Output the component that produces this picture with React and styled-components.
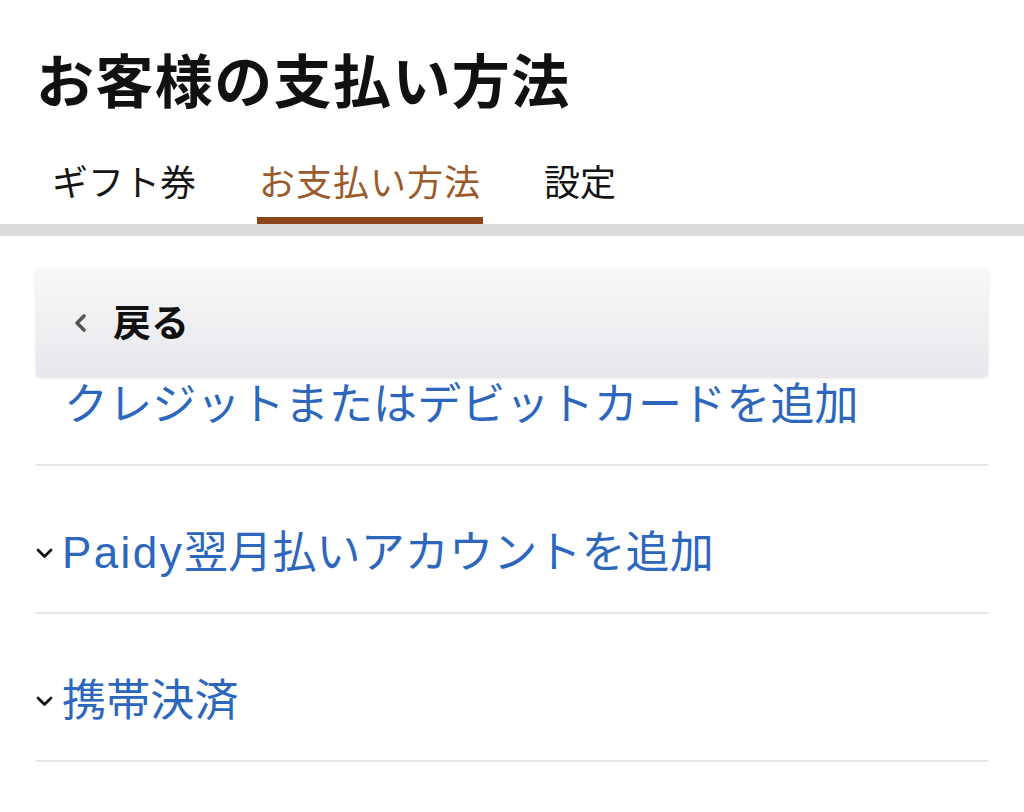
import React from 'react';
import styled, { createGlobalStyle } from 'styled-components';

const GlobalStyle = createGlobalStyle`
  html, body {
    margin: 0;
    padding: 0;
    background: #ffffff;
  }
  body {
    font-family: "Liberation Sans", "Noto Sans CJK JP", sans-serif;
    color: #111111;
  }
`;

const Page = styled.div`
  width: 1024px;
  min-height: 812px;
  background: #ffffff;
`;

const Top = styled.div`
  padding: 48px 36px 0;
`;

const Title = styled.h1`
  margin: 0;
  font-size: 58px;
  line-height: 70px;
  font-weight: 700;
  color: #111111;
  letter-spacing: 1.4px;
`;

const Tabs = styled.nav`
  display: flex;
  gap: 59px;
  margin: 44px 0 0 14px;
`;

const Tab = styled.div`
  padding: 0 2px 11px;
  font-size: 36px;
  line-height: 44px;
  letter-spacing: ${(p) => (p.$active ? '1px' : '0')};
  color: ${(p) => (p.$active ? '#9a5a2c' : '#151515')};
  border-bottom: 7px solid ${(p) => (p.$active ? '#8c4419' : 'transparent')};
`;

const GrayBar = styled.div`
  height: 12px;
  background: #dcdcde;
`;

const Content = styled.div`
  padding: 32px 36px 0;
`;

const BackBar = styled.div`
  display: flex;
  align-items: center;
  gap: 26px;
  height: 109px;
  padding-left: 37px;
  border-radius: 5px;
  background: linear-gradient(#f8f8fa, #e8e8ec);
  box-shadow: 0 1px 3px rgba(0, 0, 0, 0.14);
  box-sizing: border-box;
`;

const BackLabel = styled.span`
  font-size: 38px;
  font-weight: 700;
  line-height: 46px;
  color: #111111;
`;

const Row = styled.div`
  display: flex;
  align-items: center;
  padding: ${(p) => (p.$first ? '1px' : '60px')} 0 33px;
  border-bottom: 2px solid #e6e6e6;
`;

const Toggle = styled.span`
  display: flex;
  width: 26px;
  justify-content: flex-start;
  margin-top: 2px;
`;

const LinkText = styled.span`
  font-size: 44px;
  line-height: 53px;
  color: #2c67bd;
  letter-spacing: 0.15px;
  margin-left: ${(p) => (p.$indent ? '28px' : '0')};
`;

const Latin = styled.span`
  letter-spacing: 2.4px;
`;

const ChevronLeft = () => (
  <svg width="14" height="20" viewBox="0 0 14 20">
    <path d="M11 3 L4 10 L11 17" fill="none" stroke="#555" strokeWidth="3.6" strokeLinecap="round" strokeLinejoin="round" />
  </svg>
);

const ChevronDown = () => (
  <svg width="17" height="11" viewBox="0 0 17 11">
    <path d="M2 2 L8.5 8.5 L15 2" fill="none" stroke="#111" strokeWidth="2.8" strokeLinecap="round" strokeLinejoin="round" />
  </svg>
);

export default function App() {
  return (
    <Page>
      <GlobalStyle />
      <Top>
        <Title>お客様の支払い方法</Title>
        <Tabs>
          <Tab>ギフト券</Tab>
          <Tab $active>お支払い方法</Tab>
          <Tab>設定</Tab>
        </Tabs>
      </Top>
      <GrayBar />
      <Content>
        <BackBar>
          <ChevronLeft />
          <BackLabel>戻る</BackLabel>
        </BackBar>
        <Row $first>
          <LinkText $indent>クレジットまたはデビットカードを追加</LinkText>
        </Row>
        <Row>
          <Toggle>
            <ChevronDown />
          </Toggle>
          <LinkText>
            <Latin>Paidy</Latin>翌月払いアカウントを追加
          </LinkText>
        </Row>
        <Row>
          <Toggle>
            <ChevronDown />
          </Toggle>
          <LinkText>携帯決済</LinkText>
        </Row>
      </Content>
    </Page>
  );
}
